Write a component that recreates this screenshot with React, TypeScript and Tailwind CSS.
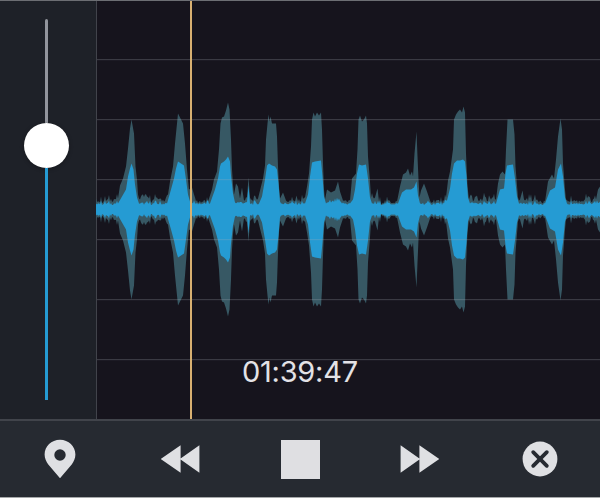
import React from "react";

type Point = [x: number, amplitude: number];

const WIDTH = 504;
const HEIGHT = 418;
const MIDDLE = 208.5;
const OFFSET = 96;

// Peak envelope: x position and distance from the centre line.
const PEAK: Point[] = [
  [96, 11], [98, 8], [118, 11], [120, 24], [123, 31], [126, 43], [128, 61], [130, 81], [131.5, 90], [134, 76],
  [135.5, 43], [137, 30], [138, 15], [140, 10], [143, 15], [147, 13], [152, 8], [156, 12], [160, 11], [165, 9],
  [168, 15], [170, 28], [173, 43], [175, 66], [177, 86], [178, 96], [180, 92], [183, 86], [185, 66], [187, 40],
  [189, 20], [192, 22], [194, 15], [196, 8], [208, 8], [212, 20], [214, 30], [217, 38], [219, 60], [220.5, 86],
  [222, 92], [224, 93], [226, 99], [228, 107], [229.5, 100], [231, 70], [232, 40], [233, 25], [234, 15], [236, 26],
  [238, 23], [240, 11], [242, 22], [244, 9], [247, 12], [248.5, 32], [250, 12], [253, 8], [258, 11], [261, 23],
  [263, 31], [265, 44], [266, 70], [267.5, 86], [268.5, 95], [269.5, 88], [270.5, 93], [272, 86], [276, 86], [277, 73],
  [278, 43], [279, 23], [280, 11], [283, 17], [286, 9], [295, 8], [296.5, 14], [298, 8], [305, 12], [307, 23],
  [309, 36], [311, 63], [312, 90], [313.5, 97], [315, 93], [317, 97], [319, 94], [321, 97], [322, 80], [323, 46],
  [324, 20], [325, 10], [327, 20], [331, 17], [335, 19], [338, 28], [340, 18], [343, 9], [350, 9], [352, 31],
  [356, 36], [357.5, 60], [358.5, 90], [360, 94], [362, 88], [364, 90], [366, 94], [367, 86], [368, 53], [370, 28],
  [371, 12], [375, 12], [377.5, 21], [379, 8], [397, 8], [400, 23], [403, 35], [406, 37], [408, 41], [410, 34],
  [412, 38], [413, 33], [414.5, 56], [416.5, 78], [417.5, 53], [418.5, 30], [419.5, 12], [421, 19], [424, 26], [427, 18],
  [430, 9], [444, 8], [446, 12], [448, 29], [450, 38], [453, 60], [454, 90], [456, 95], [458, 98], [460, 100],
  [462, 97], [463.5, 103], [465, 97], [466, 56], [467.5, 23], [469, 10], [471, 15], [473, 8], [477, 14], [479, 8],
  [485, 13], [487, 8], [492, 12], [496, 10], [498, 26], [500, 35], [502.5, 38], [505, 35], [506, 60], [507.5, 90],
  [513, 90], [514.5, 75], [515.5, 43], [517, 24], [518, 12], [520, 10], [522.5, 19], [524, 10], [530, 11], [540, 9],
  [545, 8], [548, 28], [552, 35], [554, 31], [556, 50], [558, 73], [560.5, 91], [562, 80], [563, 46], [565, 20],
  [566, 10], [580, 8], [589, 13], [591, 8], [596, 10], [598, 20], [600, 23],
];

// Average loudness envelope drawn over the peaks.
const LEVEL: Point[] = [
  [96, 6], [98, 6], [118, 6], [122, 13], [126, 20], [128, 33], [130, 41], [131.5, 46], [133.5, 40], [135, 25],
  [137, 12], [139, 6], [167, 6], [171, 20], [174, 31], [176, 41], [178, 48], [181, 46], [184, 44], [186, 30],
  [188, 15], [190, 8], [193, 6], [210, 6], [215, 20], [218, 31], [220, 43], [221, 46], [224, 48], [226, 50],
  [228, 53], [230, 48], [231, 34], [233, 16], [235, 7], [247, 7], [248.5, 24], [250, 6], [259, 6], [262, 13],
  [265, 30], [267, 44], [269, 46], [272, 44], [275, 43], [277, 40], [278.5, 26], [280, 8], [282, 6], [305, 6],
  [308, 15], [310, 33], [312, 47], [315, 48], [321, 49], [322.5, 33], [324, 13], [326, 6], [338, 9], [342, 6],
  [350, 6], [353, 10], [355, 20], [357, 36], [359, 45], [362, 44], [366, 45], [368, 31], [370, 12], [372, 6],
  [398, 6], [402, 17], [406, 20], [411, 20], [414, 22], [416.5, 28], [418, 14], [420, 6], [444, 6], [447, 9],
  [450, 21], [452, 36], [454, 46], [457, 49], [460, 49], [463, 50], [465, 48], [466.5, 33], [468, 12], [470, 6],
  [496, 6], [500, 20], [504, 21], [505.5, 36], [507, 44], [513, 45], [515, 31], [517, 13], [519, 6], [545, 6],
  [550, 19], [555, 22], [558, 40], [561, 46], [563, 33], [565, 12], [567, 6], [596, 6], [600, 8],
];

// Adds a repeatable ripple to the quiet stretches between beats.
function ripple(points: Point[], quiet: number, depth: number): Point[] {
  const result: Point[] = [];
  points.forEach((point, index) => {
    result.push(point);
    const next = points[index + 1];
    if (!next || point[1] > quiet || next[1] > quiet) return;
    for (let x = point[0] + 1; x < next[0] - 0.5; x += 1) {
      const base = point[1] + ((next[1] - point[1]) * (x - point[0])) / (next[0] - point[0]);
      const wave = Math.sin(x * 12.9898) * 43758.5453;
      const value = wave - Math.floor(wave);
      result.push([x, base + (value - 0.5) * depth + (value > 0.88 ? depth * 0.5 : 0)]);
    }
  });
  return result;
}

function envelope(points: Point[]): string {
  const top = points.map(([x, a]) => `${(x - OFFSET).toFixed(1)},${(MIDDLE - a).toFixed(1)}`);
  const bottom = [...points].reverse().map(([x, a]) => `${(x - OFFSET).toFixed(1)},${(MIDDLE + a).toFixed(1)}`);
  return [...top, ...bottom].join(" ");
}

function Waveform() {
  return (
    <svg className="block h-full w-full" viewBox={`0 0 ${WIDTH} ${HEIGHT}`} aria-label="Waveform">
      <polygon points={envelope(ripple(PEAK, 15, 5))} fill="#375864" />
      <polygon points={envelope(ripple(LEVEL, 9, 3))} fill="#259bd3" />
      {[58, 118, 178, 238, 298, 358].map((y) => (
        <rect key={y} x="1" y={y} width="503" height="1.2" fill="#a9adb8" fillOpacity="0.25" />
      ))}
      <rect x="94" y="0" width="2" height="418" fill="#d8b071" />
    </svg>
  );
}

function VolumeSlider() {
  return (
    <div className="flex h-full w-24 shrink-0 flex-col items-center bg-[#1e2128] pt-[18px] pr-[3px] pb-[19px]">
      <div className="h-[104px] w-[3px] rounded-t-full bg-[#92959d]" />
      <div className="size-[45px] shrink-0 rounded-full bg-white shadow-[0_1px_4px_rgba(0,0,0,0.3)]" />
      <div className="w-[3px] flex-1 bg-[#259bd3]" />
    </div>
  );
}

function Control({ label, children }: { label: string; children: React.ReactNode }) {
  return (
    <button aria-label={label} className="flex flex-1 items-center justify-center text-[#dfe0e3]">
      {children}
    </button>
  );
}

export default function App() {
  return (
    <main className="flex h-[498px] w-[600px] flex-col overflow-hidden border-t border-b border-t-[#6c6e73] border-b-[#a6a8aa] bg-[#16141d] font-['Inter',sans-serif]">
      <section className="flex h-[418px] shrink-0">
        <VolumeSlider />
        <div className="relative flex-1 border-l border-[#41434b]">
          <div className="-ml-px h-full">
            <Waveform />
          </div>
          <time className="absolute top-[353px] left-[145px] text-[29px] leading-9 font-normal tracking-[-0.25px] whitespace-nowrap text-[#e3e2e6] [font-feature-settings:'calt'_0]">
            01:39:47
          </time>
        </div>
      </section>
      <nav className="flex flex-1 border-t-2 border-[#41444b] bg-[#262a31]">
        <Control label="Marker">
          <svg width="32" height="40" viewBox="0 0 32 40" fill="currentColor">
            <path fillRule="evenodd" d="M16 .7C7.4.7.6 7.2.6 15.6c0 4 1.6 7 3.7 9.8L16 39.3l11.7-13.9c2.1-2.8 3.7-5.8 3.7-9.8C31.4 7.2 24.6.7 16 .7Zm0 9.6a5.7 5.7 0 1 1 0 11.4 5.7 5.7 0 0 1 0-11.4Z" />
          </svg>
        </Control>
        <Control label="Rewind">
          <svg width="40" height="28" viewBox="0 0 40 28" fill="currentColor">
            <path d="M.7 14 20.6.2v13.3L39.4.2v27.6L20.6 14.5v13.3Z" />
          </svg>
        </Control>
        <Control label="Stop">
          <span className="size-[39px] bg-[#dfdfe2]" />
        </Control>
        <Control label="Fast forward">
          <svg width="40" height="28" viewBox="0 0 40 28" fill="currentColor">
            <path d="M39.3 14 19.4.2v13.3L.6.2v27.6l18.8-13.3v13.3Z" />
          </svg>
        </Control>
        <Control label="Close">
          <svg width="36" height="36" viewBox="0 0 36 36">
            <circle cx="18" cy="18" r="17.4" fill="currentColor" />
            <path d="m11.2 11.2 13.6 13.6m0-13.6L11.2 24.8" stroke="#262a31" strokeWidth="3.8" strokeLinecap="round" />
          </svg>
        </Control>
      </nav>
    </main>
  );
}
